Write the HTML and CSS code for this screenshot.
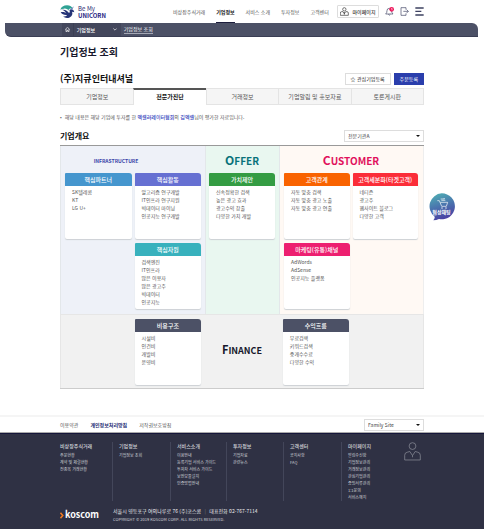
FILE: index.html
```html
<!DOCTYPE html>
<html lang="ko">
<head>
<meta charset="utf-8">
<title>Be My UNICORN - 기업정보 조회</title>
<link rel="stylesheet" href="styles.css">
</head>
<body>
<header class="wrap top">
  <a class="logo" href="#">
    <svg class="logo-mark" viewBox="0 0 45 39" aria-hidden="true">
      <path d="M1 14C3 6 11 1 21 1c9 0 16 4 16 10-4-1-8-1-11 3l2 5c-4-6-10-9-16-8-4 0-8 1-11 3z" fill="#2fa294"/>
      <path d="M2 22c7-2 12-1 16 3-4-9-9-10-14-10 10-3 18 1 23 9 3-2 3-6 1-9 3-3 8-3 12 0l3 7-7-2c4 9-3 19-15 19-4 0-9-2-11-5 7 1 10-1 11-4-7 1-15-1-19-8z" fill="#263477"/>
      <path d="M31 13l11-9-6 10z" fill="#5e78b6"/>
    </svg>
    <span class="logo-text"><span>Be My</span><strong>UNICORN</strong></span>
  </a>
  <nav class="gnb">
    <a href="#">비상장주식거래</a>
    <a class="on" href="#">기업정보</a>
    <a href="#">서비스 소개</a>
    <a href="#">투자정보</a>
    <a href="#">고객센터</a>
  </nav>
  <div class="tools">
    <button class="mypage" type="button">
      <svg viewBox="0 0 27 27" aria-hidden="true"><circle cx="13" cy="7" r="5"/><path d="M1 25v-7q0-4 4-4h4l4 6 4-6h4q4 0 4 4v7zM13 15v8"/></svg>
      마이페이지
    </button>
    <button class="icon" type="button" aria-label="알림">
      <svg viewBox="0 0 27 27" aria-hidden="true"><path d="M2 21q4-3 4-10 0-7 7-7t7 7q0 7 4 10zM10 22q3 5 6 0"/><circle class="dot" cx="20" cy="7" r="7"/><path class="mark" d="M19 5l2-1v6"/></svg>
    </button>
    <button class="icon" type="button" aria-label="로그아웃">
      <svg viewBox="0 0 27 27" aria-hidden="true"><path d="M18 8V2H3v23h15v-6M10 13h15M20 8l5 5-5 5"/></svg>
    </button>
    <button class="icon menu" type="button" aria-label="전체메뉴">
      <svg viewBox="0 0 27 27" aria-hidden="true"><path d="M1 3h25M1 13h18M1 24h25"/></svg>
    </button>
  </div>
</header>

<div class="bar">
  <nav class="wrap crumbs">
    <a class="home" href="#" aria-label="홈"><svg viewBox="0 0 15 15" aria-hidden="true"><path d="M1 7l6.500-6L14 7M3 6v8h3v-4h3v4h3V6"/></svg></a>
    <a class="crumb" href="#">기업정보<svg viewBox="0 0 12 8" aria-hidden="true"><path d="M1 1l5 5 5-5"/></svg></a>
    <a class="here" href="#"><span>기업정보 조회</span></a>
  </nav>
</div>

<main class="wrap">
  <h1>기업정보 조회</h1>
  <div class="company">
    <h2>(주)지큐인터내셔널</h2>
    <button class="btn" type="button">☆ 관심기업등록</button>
    <button class="btn primary" type="button">주문등록</button>
  </div>
  <nav class="tabs">
    <a href="#">기업정보</a>
    <a class="on" href="#">전문가진단</a>
    <a href="#">거래정보</a>
    <a href="#">기업알림 및 홍보자료</a>
    <a href="#">토론게시판</a>
  </nav>
  <p class="note">해당 내용은 해당 기업에 투자를 한 <b>엑셀러레이터협회</b>의 <b>김엑셀</b>님이 평가한 자료입니다.</p>
  <div class="section-head">
    <h3>기업개요</h3>
    <div class="select agency"><select aria-label="전문기관"><option>전문기관A</option></select></div>
  </div>

  <div class="canvas">
    <section class="zone infra">
      <h4 class="small">INFRASTRUCTURE</h4>
      <div class="cards">
        <article class="card blue"><h5>핵심파트너</h5><ul><li>SK텔레콤</li><li>KT</li><li>LG U+</li></ul></article>
        <article class="card violet"><h5>핵심활동</h5><ul><li>알고리즘 연구개발</li><li>IT인프라 연구지원</li><li>빅데이터 마이닝</li><li>인공지능 연구개발</li></ul></article>
        <article class="card teal second"><h5>핵심자원</h5><ul><li>검색엔진</li><li>IT인프라</li><li>많은 이용자</li><li>많은 광고주</li><li>빅데이터</li><li>인공지능</li></ul></article>
      </div>
    </section>
    <section class="zone offer">
      <h4>OFFER</h4>
      <div class="cards">
        <article class="card green"><h5>가치제안</h5><ul><li>신속정확한 검색</li><li>높은 광고 효과</li><li>광고수익 창출</li><li>다양한 가치 개발</li></ul></article>
      </div>
    </section>
    <section class="zone customer">
      <h4>CUSTOMER</h4>
      <div class="cards">
        <article class="card orange"><h5>고객관계</h5><ul><li>자동 맞춤 검색</li><li>자동 맞춤 광고 노출</li><li>자동 맞춤 광고 연출</li></ul></article>
        <article class="card red"><h5>고객세분화(타겟고객)</h5><ul><li>네티즌</li><li>광고주</li><li>웹사이트 블로그</li><li>다양한 고객</li></ul></article>
        <article class="card pink"><h5>마케팅(유통)채널</h5><ul><li>AdWords</li><li>AdSense</li><li>인공지능 플랫폼</li></ul></article>
      </div>
    </section>
    <section class="finance">
      <div class="cards cost">
        <article class="card navy second"><h5>비용구조</h5><ul><li>시설비</li><li>인건비</li><li>개발비</li><li>운영비</li></ul></article>
      </div>
      <h4>FINANCE</h4>
      <div class="cards revenue">
        <article class="card navy"><h5>수익흐름</h5><ul><li>무료검색</li><li>키워드검색</li><li>중개수수료</li><li>다양한 수익</li></ul></article>
      </div>
    </section>
  </div>
</main>

<button class="chat" type="button">
  <svg class="bubble" viewBox="0 0 81 84" aria-hidden="true">
    <defs><linearGradient id="g" x1="0" y1="0" x2="0.300" y2="1"><stop offset="0" stop-color="#4fb5b4"/><stop offset="0.550" stop-color="#4a74ae"/><stop offset="1" stop-color="#4a44a4"/></linearGradient></defs>
    <path d="M41 1a39 39 0 1 1-8 77q-8 4-17 4 5-5 4-11A39 39 0 0 1 41 1z" fill="url(#g)"/>
    <path d="M28 23h6l7 17h14l4-12H37M38 18h12l-3-3M52 22H40" fill="none" stroke="#fff" stroke-width="2"/>
    <circle cx="42" cy="45" r="2" fill="#fff"/><circle cx="54" cy="45" r="2" fill="#fff"/>
  </svg>
  <span>협상채팅</span>
</button>

<footer>
  <div class="policy">
    <div class="wrap policy-in">
      <a href="#">이용약관</a>
      <a class="strong" href="#">개인정보처리방침</a>
      <a href="#">저작권보호방침</a>
      <div class="select family"><select aria-label="Family Site"><option>Family Site</option></select></div>
    </div>
  </div>
  <div class="foot">
    <div class="wrap">
      <div class="sitemap">
        <div><h6>비상장주식거래</h6><a href="#">주문현황</a><a href="#">계약 및 체결현황</a><a href="#">전종목 거래현황</a></div>
        <div><h6>기업정보</h6><a href="#">기업정보 조회</a></div>
        <div><h6>서비스소개</h6><a href="#">이용안내</a><a href="#">등록기업 서비스 가이드</a><a href="#">투자자 서비스 가이드</a><a href="#">보안모듈설치</a><a href="#">인증방법안내</a></div>
        <div><h6>투자정보</h6><a href="#">기업자료</a><a href="#">관련뉴스</a></div>
        <div><h6>고객센터</h6><a href="#">공지사항</a><a href="#">FAQ</a></div>
        <div><h6>마이페이지</h6><a href="#">알림수신함</a><a href="#">기업정보관리</a><a href="#">거래정보관리</a><a href="#">관심기업관리</a><a href="#">증빙서류관리</a><a href="#">1:1문의</a><a href="#">서비스해지</a></div>
        <svg class="person" viewBox="0 0 50 56" aria-hidden="true"><circle cx="25" cy="12" r="10"/><path d="M2 53V39q0-8 8-9l7-2 8 12 8-12 7 2q8 1 8 9v14zM25 40v5"/></svg>
      </div>
      <div class="corp">
        <a class="koscom" href="#"><svg viewBox="0 0 10 18" aria-hidden="true"><path d="M1 2l6 7-6 7"/></svg>koscom</a>
        <div>
          <address>서울시 영등포구 여의나루로 76 (주)코스콤 <i>|</i> 대표전화 02-767-7114</address>
          <p>COPYRIGHT © 2019 KOSCOM CORP. ALL RIGHTS RESERVED.</p>
        </div>
      </div>
    </div>
  </div>
</footer>
</body>
</html>
```
FILE: styles.css
```css
* { box-sizing: border-box; margin: 0; padding: 0; }
body {
  position: relative;
  background: #fff;
  color: #555;
  font: 5px/8px "Noto Sans CJK KR", "Noto Sans", sans-serif;
}
a { color: inherit; text-decoration: none; }
ul { list-style: none; }
button, select { font: inherit; color: inherit; border: 0; background: none; }
svg { display: block; fill: none; stroke: currentColor; }
.wrap { width: 76%; max-width: 364px; margin: 0 auto; }

/* header */
.top { display: flex; align-items: center; height: 23px; }
.logo { display: flex; align-items: center; gap: 3px; width: 113px; }
.logo-mark { width: 15px; height: 13px; stroke: none; }
.logo-text { display: grid; color: #29286f; font-size: 6px; line-height: 7px; }
.logo-text strong { color: #272383; }
.gnb { display: flex; flex: 1; gap: 11px; height: 23px; white-space: nowrap; }
.gnb a { line-height: 23px; }
.gnb .on { color: #111; font-weight: 700; border-bottom: 1px solid #1c1d3c; }
.tools { display: flex; align-items: center; gap: 6px; }
.mypage {
  display: flex; align-items: center; justify-content: center; gap: 3px;
  width: 42px; height: 13px; border: 1px solid #ddd; border-radius: 1px;
  color: #333; font-weight: 500; white-space: nowrap;
}
.mypage svg { width: 9px; height: 9px; stroke-width: 2; }
.icon { width: 9px; height: 9px; color: #3c4160; }
.icon svg { width: 9px; height: 9px; stroke-width: 2; }
.menu svg { stroke-width: 4; }
.dot { fill: #ed1459; stroke: none; }
.mark { stroke: #fff; }

/* breadcrumb bar */
.bar {
  margin: 0 6px 0 5px; background: #4c5166;
  border-bottom: 1px solid #3a3e54; border-radius: 0 6px 0 6px; color: #fff;
}
.crumbs { display: flex; height: 13px; line-height: 13px; }
.home { display: grid; place-items: center; width: 12px; background: #43475c; border-right: 1px solid #3b3f54; }
.home svg { width: 5px; height: 5px; stroke-width: 2; }
.crumb { display: flex; align-items: center; justify-content: space-between; width: 47px; padding: 0 4px 0 3px; background: #43475c; font-weight: 500; }
.crumb svg { width: 4px; height: 3px; stroke-width: 2; }
.here { padding: 2px 3px; line-height: 8px; }
.here span { display: block; border-bottom: 1px solid #a4a7b4; }

/* company heading */
h1 { margin-top: 7px; color: #17182c; font-size: 10px; line-height: 16px; }
.company { display: flex; align-items: center; gap: 3px; margin-top: 11px; height: 15px; }
h2 { flex: 1; color: #111; font-size: 9px; line-height: 15px; }
.btn { height: 12px; padding: 0 5px; border: 1px solid #ddd; color: #222; line-height: 10px; }
.primary { background: #2a3eac; border-color: #2a3eac; color: #fff; }
.tabs { display: grid; grid-template-columns: repeat(5, 1fr); margin-top: 2px; border: 1px solid #e4e4e4; background: #f5f5f5; font-size: 6px; text-align: center; white-space: nowrap; }
.tabs a { height: 15px; line-height: 15px; border-left: 1px solid #e4e4e4; }
.tabs a:first-child { border-left: 0; }
.tabs .on { margin: -1px 0; height: 17px; background: #fff; border-top: 2px solid #555; color: #111; font-weight: 700; line-height: 14px; }
.note { margin-top: 8px; }
.note::before { content: "•"; margin-right: 3px; }
.note b { color: #3344bd; font-weight: 500; }
.section-head { display: flex; align-items: center; justify-content: space-between; margin-top: 9px; height: 12px; }
h3 { color: #111; font-size: 8px; line-height: 12px; }
.select { position: relative; height: 12px; border: 1px solid #ddd; background: #fff; }
.select select { display: block; width: 100%; height: 10px; padding: 0 3px; appearance: none; color: #444; line-height: 10px; }
.select::after { content: ""; position: absolute; right: 3px; top: 4px; border: 2px solid transparent; border-top-color: #111; border-bottom: 0; }
.agency { width: 80px; }

/* business model canvas */
.canvas { display: grid; grid-template-columns: 145fr 74fr 145fr; margin-top: 3px; border-top: 1px solid #999; border-bottom: 1px solid #ccc; }
.zone { padding: 0 4px 5px; border-left: 1px solid #e3e7ea; }
.infra { padding-left: 4px; background: #eef1f8; }
.offer { padding: 0 4px 5px 3px; background: #e9f7f0; }
.customer { padding: 0 5px 5px 4px; background: #fff9f4; border-right: 1px solid #eee; }
h4 { height: 27px; font-size: 10px; line-height: 27px; text-align: center; }
h4::first-letter { font-size: 12px; }
.small, .small::first-letter { font-size: 5px; }
.small { padding-right: 34px; color: #3a45a9; line-height: 29px; }
.offer h4 { color: #08727a; }
.customer h4 { color: #e1105c; }
.cards { display: grid; grid-template-columns: repeat(2, 1fr); gap: 4px 3px; }
.offer .cards { grid-template-columns: 1fr; }
.second { grid-column: 2; }
.card { min-height: 66px; background: #fff; border-radius: 1px 3px 2px 2px; box-shadow: 0 1px 1px #ccd0d4; white-space: nowrap; }
.card h5 { height: 13px; border-radius: 1px 3px 0 0; color: #fff; font-size: 6px; font-weight: 500; line-height: 13px; text-align: center; }
.card ul { padding: 2px 0 0 7px; }
.blue h5 { background: #4596ce; }
.violet h5 { background: #6670d2; }
.teal h5 { background: #38b1bd; }
.green h5 { background: #349c43; }
.orange h5 { background: #f96300; }
.red h5 { background: #fb2d38; }
.pink h5 { background: #ed1f70; }
.navy h5 { background: #4c5166; }
.finance { grid-column: 1 / -1; display: grid; grid-template-columns: 145fr 74fr 145fr; align-items: center; border: 1px solid #e6e6e6; border-bottom: 0; background: #f1f1f1; }
.finance h4 { color: #17182c; font-size: 9px; line-height: 22px; }
.finance h4::first-letter { font-size: 11px; }
.cost { padding: 4px 4px 3px; }
.revenue { padding: 4px 5px 3px 4px; }

/* floating chat button */
.chat { position: absolute; top: 193px; left: 50%; width: 27px; height: 28px; margin-left: 186px; color: #fff; font-weight: 700; }
.bubble { width: 27px; height: 28px; stroke: none; }
.chat span { position: absolute; top: 15px; left: 0; width: 100%; text-align: center; }

/* footer */
.policy { margin-top: 26px; border-top: 2px solid #f5f5f5; border-bottom: 1px solid #aaa; }
.policy-in { display: flex; align-items: center; gap: 12px; height: 15px; }
.strong { color: #20276f; font-weight: 700; }
.family { width: 60px; margin-left: auto; }
.foot { padding: 8px 0 6px; background: #2f3144; border-top: 1px solid #15163a; color: #d0d1d8; }
.sitemap { display: grid; grid-template-columns: 52fr 58fr 56fr 57fr 58fr 58fr 25fr; font-size: 4px; line-height: 7px; white-space: nowrap; }
.sitemap > div { min-height: 55px; }
.sitemap > div + div { padding-left: 6px; border-left: 1px solid #43465a; }
.sitemap a { display: block; }
h6 { margin-bottom: 3px; font-size: 5px; font-weight: 500; line-height: 7px; }
.person { width: 17px; height: 19px; margin-left: 5px; color: #92949f; stroke-width: 2; }
.corp { display: flex; align-items: center; margin-top: 6px; }
.koscom { display: flex; align-items: center; gap: 1px; width: 53px; color: #fff; font-size: 9px; font-weight: 700; line-height: 14px; }
.koscom svg { width: 4px; height: 7px; color: #f27a22; stroke-width: 4; }
address { font-style: normal; color: #eee; }
address i { margin: 0 2px; font-style: normal; color: #777; }
.corp p { font-size: 4px; }
```
